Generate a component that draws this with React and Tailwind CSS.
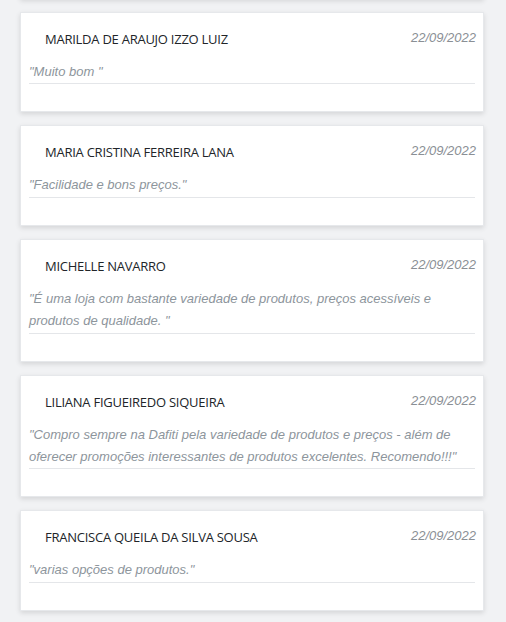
import React from "react";

const reviews = [
    { name: "MARILDA DE ARAUJO IZZO LUIZ", date: "22/09/2022", text: "\"Muito bom \"" },
    { name: "MARIA CRISTINA FERREIRA LANA", date: "22/09/2022", text: "\"Facilidade e bons preços.\"" },
    {
        name: "MICHELLE NAVARRO",
        date: "22/09/2022",
        text: "\"É uma loja com bastante variedade de produtos, preços acessíveis e produtos de qualidade. \"",
    },
    {
        name: "LILIANA FIGUEIREDO SIQUEIRA",
        date: "22/09/2022",
        text: "\"Compro sempre na Dafiti pela variedade de produtos e preços - além de oferecer promoções interessantes de produtos excelentes. Recomendo!!!\"",
    },
    { name: "FRANCISCA QUEILA DA SILVA SOUSA", date: "22/09/2022", text: "\"varias opções de produtos.\"" },
];

const ReviewCard = ({ review }) => {
    return (
        <div className="bg-white border border-[#e6e8eb] shadow-[0_2px_5px_rgba(0,0,0,0.12)] pt-[16px] pb-[27px] pl-[8px] pr-[7px]">
            <div className="flex items-start justify-between">
                <span className="pl-[16px] text-[13px] leading-[20px] tracking-[-0.25px] text-[#212529] font-['Open_Sans','Noto_Sans',sans-serif]">
                    {review.name}
                </span>
                <span className="text-[13px] leading-[18px] italic text-[#8a8f95] font-['Liberation_Sans',Arial,sans-serif]">
                    {review.date}
                </span>
            </div>
            <p className="mt-[12px] mr-[1px] border-b border-[#e4e6e9] text-[13px] leading-[22.4px] italic text-[#8d959c] font-['Liberation_Sans',Arial,sans-serif]">
                {review.text}
            </p>
        </div>
    );
};

export default function App() {
    return (
        <div className="min-h-[622px] bg-[#f1f2f4] overflow-hidden">
            <div className="-mt-[104px] pl-[20px] pr-[22px] flex flex-col gap-[13px] pb-[20px]">
                {/* card above, scrolled out of view */}
                <div className="h-[103px] bg-white border border-[#e6e8eb] shadow-[0_2px_5px_rgba(0,0,0,0.12)]"></div>
                {reviews.map((r, i) => (
                    <ReviewCard key={i} review={r} />
                ))}
            </div>
        </div>
    );
}
